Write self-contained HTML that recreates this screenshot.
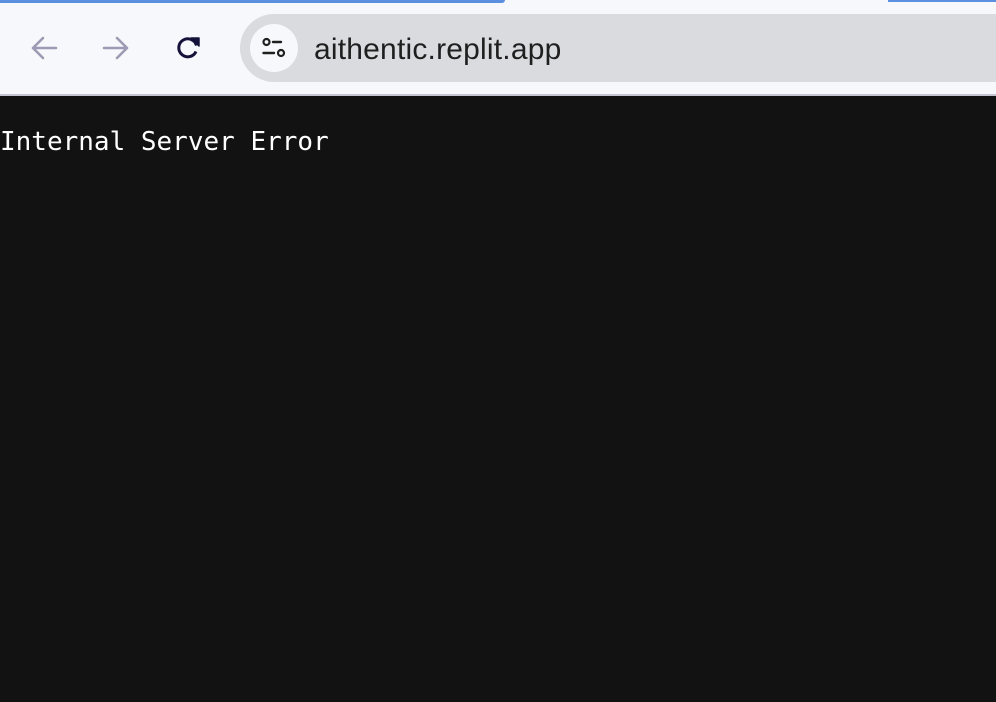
<!DOCTYPE html>
<html><head><meta charset="utf-8"><style>
html,body{margin:0;padding:0;width:996px;height:702px;overflow:hidden;background:#121212}
.bar{position:absolute;left:0;top:0;width:996px;height:94px;background:#f7f8fc}
.line{position:absolute;left:0;top:94px;width:996px;height:2px;background:#c5c4d0}
.blue1{position:absolute;left:0;top:0;width:505px;height:3px;background:#5b8fdf;border-radius:0 0 3px 0}
.blue2{position:absolute;left:888px;top:0;width:108px;height:2px;background:#5b8fdf}
.url{position:absolute;left:240px;top:14px;width:800px;height:68px;background:#dadbdf;border-radius:34px}
.ic{position:absolute;left:250px;top:24px;width:48px;height:48px;border-radius:50%;background:#f7f8fc}
.ut{position:absolute;left:314px;top:33px;font:30px/34px "Liberation Sans",sans-serif;color:#1f1f1f;letter-spacing:0.2px}
.txt{position:absolute;left:0;top:126px;font:26px "DejaVu Sans Mono","Liberation Mono",monospace;color:#fff;line-height:32px;margin:0}
svg{position:absolute}
</style></head><body>
<div class="bar"></div>
<div class="blue1"></div><div class="blue2"></div>
<div class="line"></div>
<svg style="left:28px;top:32px" width="32" height="32" viewBox="0 0 32 32"><path d="M28 16H5M15 6L5 16L15 26" fill="none" stroke="#9d9ab3" stroke-width="2.6" stroke-linecap="round" stroke-linejoin="round"/></svg>
<svg style="left:100px;top:32px" width="32" height="32" viewBox="0 0 32 32"><path d="M4 16H27M17 6L27 16L17 26" fill="none" stroke="#9d9ab3" stroke-width="2.6" stroke-linecap="round" stroke-linejoin="round"/></svg>
<svg style="left:172px;top:32px" width="32" height="32" viewBox="0 0 32 32"><path d="M24.5 13.5A9 9 0 1 0 24 19.5" fill="none" stroke="#15123a" stroke-width="3"/><path d="M19 6H27V14Z" fill="#15123a" stroke="#15123a" stroke-width="1.5" stroke-linejoin="round"/></svg>
<div class="url"></div>
<div class="ic"></div>
<svg style="left:260px;top:34px" width="28" height="28" viewBox="0 0 28 28"><circle cx="6.5" cy="8" r="3" fill="none" stroke="#1f1f1f" stroke-width="2.2"/><path d="M13 8H21" stroke="#1f1f1f" stroke-width="2.4" stroke-linecap="round"/><circle cx="21" cy="19" r="3" fill="none" stroke="#1f1f1f" stroke-width="2.2"/><path d="M3.5 19H14" stroke="#1f1f1f" stroke-width="2.4" stroke-linecap="round"/></svg>
<div class="ut">aithentic.replit.app</div>
<pre class="txt">Internal Server Error</pre>
</body></html>
